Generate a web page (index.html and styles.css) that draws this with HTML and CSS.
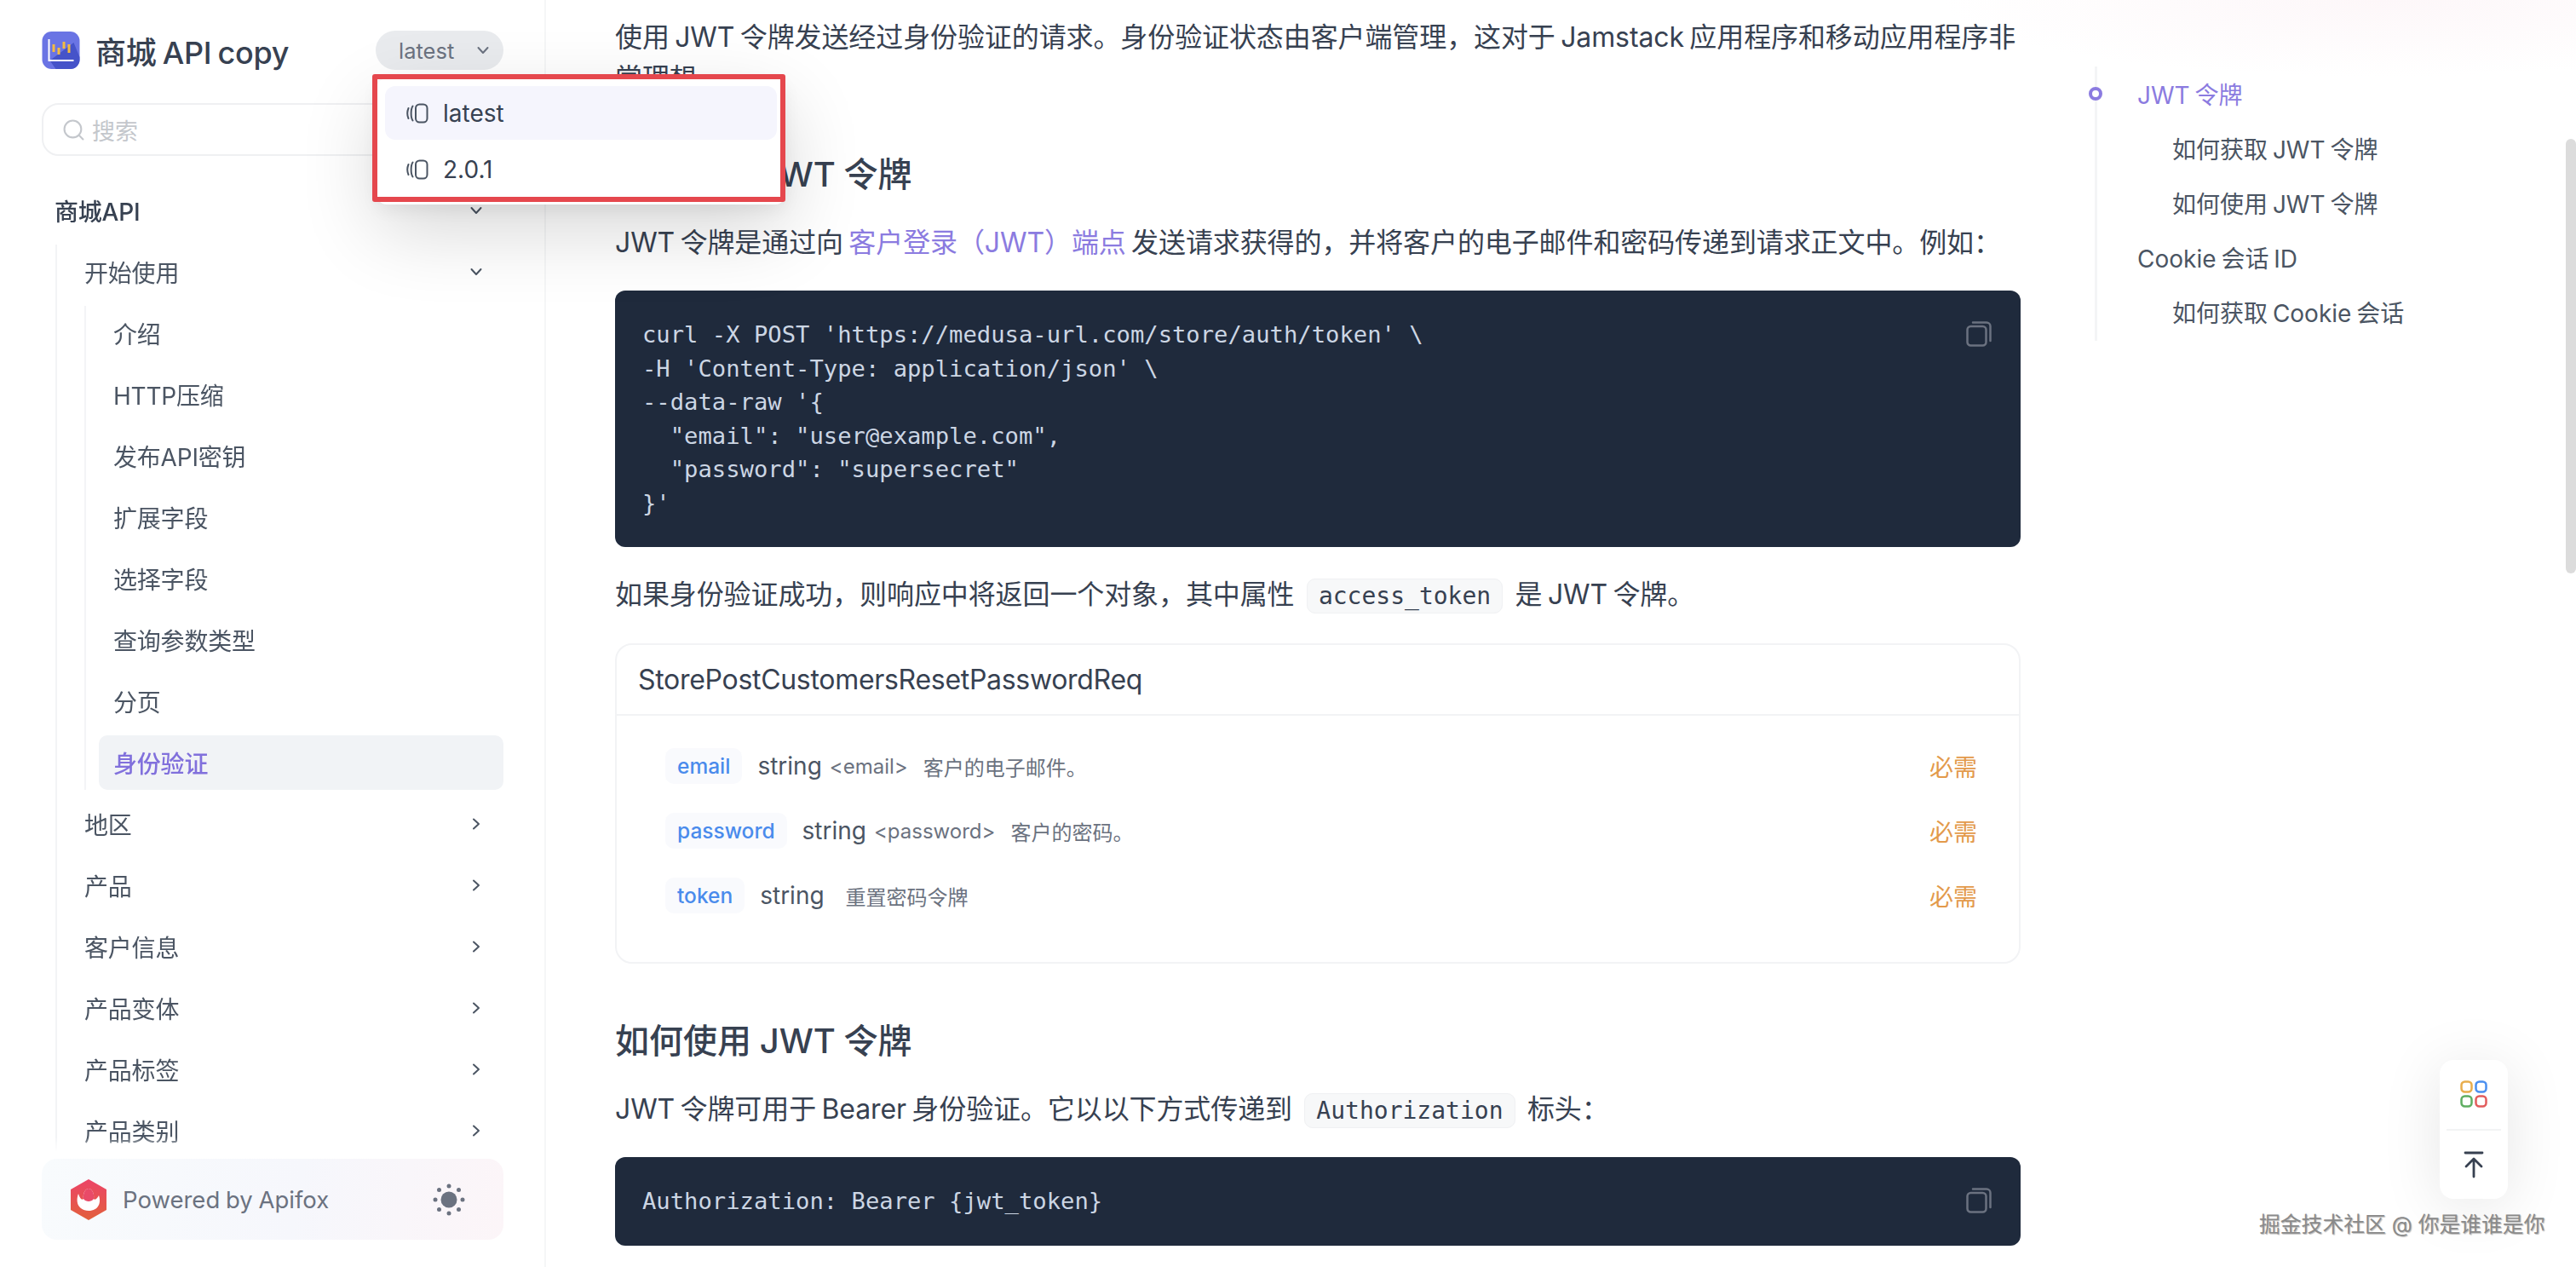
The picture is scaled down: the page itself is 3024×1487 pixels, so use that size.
FILE: index.html
```html
<!DOCTYPE html>
<html lang="zh-CN">
<head>
<meta charset="utf-8">
<title>商城 API copy</title>
<link rel="stylesheet" href="styles.css">
</head>
<body>
<svg class="defs" width="0" height="0" aria-hidden="true">
  <symbol id="down" viewBox="0 0 16 16"><path d="M2.5 5l5.5 6 5.500-6" fill="none" stroke="currentColor" stroke-width="2" stroke-linecap="round" stroke-linejoin="round"/></symbol>
  <symbol id="right" viewBox="0 0 16 16"><path d="M5 2.500l6 5.500-6 5.500" fill="none" stroke="currentColor" stroke-width="2" stroke-linecap="round" stroke-linejoin="round"/></symbol>
  <symbol id="ver" viewBox="0 0 26 24"><rect x="11" y="1.500" width="13.500" height="21" rx="4.500" fill="none" stroke="currentColor" stroke-width="2"/><path d="M7.500 3.500C5 7 5 17 7.500 20.500M2.500 6C1 9.500 1 14.500 2.500 18" fill="none" stroke="currentColor" stroke-width="2" stroke-linecap="round"/></symbol>
  <symbol id="copy" viewBox="0 0 30 30"><rect x="1.500" y="6" width="22" height="22.500" rx="4" fill="none" stroke="currentColor" stroke-width="2.500"/><path d="M8 1.500h16a4.500 4.500 0 0 1 4.500 4.500v17" fill="none" stroke="currentColor" stroke-width="2.500" stroke-linecap="round"/></symbol>
</svg>

<aside class="sidebar">
  <header class="brand">
    <svg class="brand-logo" viewBox="0 0 44 44">
      <rect width="44" height="44" rx="11" fill="#6a74e4"/>
      <path d="M9 34L37 13l7 17v3a11 11 0 0 1-11 11H16z" fill="#4553c9"/>
      <path d="M8 9v25h29" fill="none" stroke="#fff" stroke-width="2"/>
      <g fill="#f4bb41"><rect x="12" y="15" width="3" height="9"/><rect x="18" y="19" width="3" height="8"/><rect x="24" y="12" width="3" height="8"/><rect x="30" y="15" width="3" height="10"/></g>
    </svg>
    <span class="brand-name">商城 API copy</span>
    <button class="version-pill"><span>latest</span><svg class="pill-chev"><use href="#down"/></svg></button>
  </header>

  <div class="search">
    <svg class="search-icon" viewBox="0 0 24 24"><circle cx="11" cy="11" r="9.500" fill="none" stroke="currentColor" stroke-width="2"/><path d="M18 18l4.500 4.500" stroke="currentColor" stroke-width="2" stroke-linecap="round"/></svg>
    <span>搜索</span>
  </div>

  <nav class="nav">
    <div class="row row-top"><span>商城API</span><svg class="chev"><use href="#down"/></svg></div>
    <div class="group group-1">
      <div class="row"><span>开始使用</span><svg class="chev"><use href="#down"/></svg></div>
      <div class="group group-2">
        <div class="row"><span>介绍</span></div>
        <div class="row"><span>HTTP压缩</span></div>
        <div class="row"><span>发布API密钥</span></div>
        <div class="row"><span>扩展字段</span></div>
        <div class="row"><span>选择字段</span></div>
        <div class="row"><span>查询参数类型</span></div>
        <div class="row"><span>分页</span></div>
        <div class="row row-active"><span>身份验证</span></div>
      </div>
      <div class="row"><span>地区</span><svg class="chev"><use href="#right"/></svg></div>
      <div class="row"><span>产品</span><svg class="chev"><use href="#right"/></svg></div>
      <div class="row"><span>客户信息</span><svg class="chev"><use href="#right"/></svg></div>
      <div class="row"><span>产品变体</span><svg class="chev"><use href="#right"/></svg></div>
      <div class="row"><span>产品标签</span><svg class="chev"><use href="#right"/></svg></div>
      <div class="row"><span>产品类别</span><svg class="chev"><use href="#right"/></svg></div>
    </div>
  </nav>

  <footer class="powered">
    <svg class="fox" viewBox="0 0 42 48">
      <defs><linearGradient id="foxg" x1="0" y1="0" x2="0" y2="1"><stop offset="0" stop-color="#ec4468"/><stop offset="1" stop-color="#e2603c"/></linearGradient></defs>
      <path d="M21 0l21 12v24L21 48 0 36V12z" fill="url(#foxg)"/>
      <path d="M9 17c-3 8-2 19 12 20 12 0 15-10 12-18-2 4-5 6-6 4 1-6-2-12-6-12s-7 6-6 12c-2 2-4 0-6-6z" fill="#fff"/>
      <path d="M21 11c4 0 7 6 6 12-1 2-4 3-6 3s-5-1-6-3c-1-6 2-12 6-12z" fill="#e94a68"/>
    </svg>
    <span class="powered-text">Powered by Apifox</span>
    <svg class="sun" viewBox="0 0 38 38" fill="#6b7280">
      <circle cx="19" cy="19" r="9.500"/>
      <circle cx="19" cy="3" r="2.500"/><circle cx="19" cy="35" r="2.500"/><circle cx="3" cy="19" r="2.500"/><circle cx="35" cy="19" r="2.500"/>
      <circle cx="7.500" cy="7.500" r="2.500"/><circle cx="30.500" cy="7.500" r="2.500"/><circle cx="7.500" cy="30.500" r="2.500"/><circle cx="30.500" cy="30.500" r="2.500"/>
    </svg>
  </footer>

  <div class="dropdown">
    <div class="dd-item dd-active"><svg class="dd-icon"><use href="#ver"/></svg><span>latest</span></div>
    <div class="dd-item"><svg class="dd-icon"><use href="#ver"/></svg><span>2.0.1</span></div>
  </div>
  <div class="red-frame"></div>
</aside>

<main class="content">
  <p class="para para-first">使用 JWT 令牌发送经过身份验证的请求。身份验证状态由客户端管理，这对于 Jamstack 应用程序和移动应用程序非常理想。</p>
  <h2 class="heading heading-first">如何获取 JWT 令牌</h2>
  <p class="para para-tight">JWT 令牌是通过向 <a class="link">客户登录（JWT）端点</a> 发送请求获得的，并将客户的电子邮件和密码传递到请求正文中。例如：</p>
  <div class="code-block">
<pre class="code">curl -X POST 'https://medusa-url.com/store/auth/token' \
-H 'Content-Type: application/json' \
--data-raw '{
  "email": "user@example.com",
  "password": "supersecret"
}'</pre>
    <svg class="copy"><use href="#copy"/></svg>
  </div>
  <p class="para">如果身份验证成功，则响应中将返回一个对象，其中属性 <code class="inline">access_token</code> 是 JWT 令牌。</p>

  <section class="schema">
    <h3 class="schema-title">StorePostCustomersResetPasswordReq</h3>
    <div class="schema-body">
      <div class="prop">
        <span class="prop-name">email</span><span class="prop-type">string</span><span class="prop-format">&lt;email&gt;</span><span class="prop-desc">客户的电子邮件。</span><span class="prop-req">必需</span>
      </div>
      <div class="prop">
        <span class="prop-name">password</span><span class="prop-type">string</span><span class="prop-format">&lt;password&gt;</span><span class="prop-desc">客户的密码。</span><span class="prop-req">必需</span>
      </div>
      <div class="prop">
        <span class="prop-name">token</span><span class="prop-type">string</span><span class="prop-desc prop-desc-wide">重置密码令牌</span><span class="prop-req">必需</span>
      </div>
    </div>
  </section>

  <h2 class="heading heading-second">如何使用 JWT 令牌</h2>
  <p class="para para-tight">JWT 令牌可用于 Bearer 身份验证。它以以下方式传递到 <code class="inline">Authorization</code> 标头：</p>
  <div class="code-block">
<pre class="code">Authorization: Bearer {jwt_token}</pre>
    <svg class="copy"><use href="#copy"/></svg>
  </div>
</main>

<aside class="toc">
  <span class="toc-dot"></span>
  <a class="toc-item toc-active">JWT 令牌</a>
  <a class="toc-item toc-sub">如何获取 JWT 令牌</a>
  <a class="toc-item toc-sub">如何使用 JWT 令牌</a>
  <a class="toc-item">Cookie 会话 ID</a>
  <a class="toc-item toc-sub">如何获取 Cookie 会话</a>
</aside>

<div class="scroll-thumb"></div>

<div class="float-card">
  <div class="float-cell">
    <svg class="apps" viewBox="0 0 32 32" fill="none" stroke-width="2.500">
      <rect x="1.500" y="1.500" width="12" height="12" rx="4" stroke="#e8ad4c"/>
      <rect x="18.500" y="1.500" width="12" height="12" rx="4" stroke="#4a8ff0"/>
      <rect x="1.500" y="18.500" width="12" height="12" rx="4" stroke="#5fae62"/>
      <rect x="18.500" y="18.500" width="12" height="12" rx="4" stroke="#e25c5c"/>
    </svg>
  </div>
  <div class="float-cell float-cell-top">
    <svg class="totop" viewBox="0 0 24 32" fill="none" stroke="#374151" stroke-width="2.800" stroke-linecap="round" stroke-linejoin="round">
      <path d="M2 2h20M12 30V10M3 18l9-9 9 9"/>
    </svg>
  </div>
</div>

<div class="watermark">掘金技术社区 @ 你是谁谁是你</div>
</body>
</html>
```
FILE: styles.css
```css
* { box-sizing: border-box; }
html, body { margin: 0; height: 100%; }
body {
  display: flex;
  height: 1487px;
  overflow: hidden;
  position: relative;
  background: radial-gradient(ellipse 520px 90px at 2800px 0, #fdf7f9, rgba(253,247,249,0)) #fff;
  font-family: Inter, "Noto Sans CJK SC", sans-serif;
  color: #374151;
  font-size: 32px;
}
.defs { position: absolute; }

/* sidebar */
.sidebar {
  position: relative;
  z-index: 10;
  flex: none;
  width: 641px;
  display: flex;
  flex-direction: column;
  padding: 36px 48px 32px 49px;
  border-right: 2px solid #f5f6f7;
  background: #fff;
}
.brand { display: flex; align-items: center; height: 46px; }
.brand-logo { width: 45px; height: 44px; flex: none; margin-right: 18px; }
.brand-name { font-size: 36px; font-weight: 500; color: #374151; white-space: nowrap; letter-spacing: -.3px; word-spacing: -2px; }
.version-pill {
  margin-left: auto;
  width: 150px;
  height: 46px;
  border: 0;
  border-radius: 23px;
  background: #e9ebee;
  color: #6b7280;
  font: 25.500px Inter, sans-serif;
  display: flex;
  align-items: center;
  padding: 0 16px 0 27px;
  justify-content: space-between;
}
.pill-chev { width: 16px; height: 16px; color: #6b7280; }

.search {
  margin-top: 39px;
  height: 62px;
  border: 2px solid #eff0f2;
  border-radius: 20px;
  display: flex;
  align-items: center;
  padding-left: 23px;
  color: #c4c7cc;
  font-size: 27px;
}
.search-icon { width: 25px; height: 25px; margin-right: 9px; }

.nav {
  flex: 1;
  min-height: 0;
  margin-top: 32px;
  overflow: hidden;
  -webkit-mask-image: linear-gradient(#000 calc(100% - 17px), transparent);
  mask-image: linear-gradient(#000 calc(100% - 17px), transparent);
}
.row {
  height: 64px;
  margin-bottom: 8px;
  display: flex;
  align-items: center;
  justify-content: space-between;
  padding: 0 24px 0 17px;
  border-radius: 10px;
  font-size: 28px;
  letter-spacing: -.2px;
  color: #4b5563;
  white-space: nowrap;
}
.row-top { padding-left: 15px; font-weight: 500; color: #374151; }
.chev { width: 16px; height: 16px; color: #4b5563; flex: none; }
.group { border-left: 2px solid #f3f4f6; padding-left: 15px; }
.group-1 { margin-left: 16px; }
.group-2 { margin-left: 17px; margin-bottom: 8px; }
.group-2 .row:last-child { margin-bottom: 0; }
.row-active { background: #f1f3f6; color: #8170dc; font-weight: 500; }

.powered {
  flex: none;
  margin-top: 8px;
  height: 95px;
  border-radius: 18px;
  background: linear-gradient(100deg, #f8fbfd 0%, #f6f7fc 55%, #fcf5f8 100%);
  display: flex;
  align-items: center;
  padding-left: 34px;
}
.fox { width: 42px; height: 48px; margin-right: 19px; flex: none; }
.powered-text { font-size: 27.500px; color: #6b7280; white-space: nowrap; word-spacing: -1px; }
.sun { width: 38px; height: 38px; margin-left: auto; margin-right: 45px; }

.dropdown {
  position: absolute;
  left: 442px;
  top: 92px;
  width: 480px;
  height: 148px;
  padding: 9px 10px;
  display: flex;
  flex-direction: column;
  gap: 3px;
  background: #fff;
  border-radius: 12px;
  box-shadow: 0 30px 90px rgba(0,0,0,.16), 0 6px 20px rgba(0,0,0,.06);
}
.dd-item {
  height: 63px;
  flex: none;
  display: flex;
  align-items: center;
  padding-left: 25px;
  border-radius: 12px;
  font-size: 28px;
  color: #374151;
}
.dd-active { background: #f5f5fd; }
.dd-icon { width: 26px; height: 24px; margin-right: 17px; color: #4b5563; }
.red-frame {
  position: absolute;
  left: 437px;
  top: 87px;
  width: 485px;
  height: 150px;
  border: 6px solid #e5474d;
  border-radius: 3px;
}

/* content */
.content {
  flex: none;
  width: 1650px;
  margin-left: 81px;
  padding-top: 20px;
}
.para { margin: 32px 0 0; line-height: 48px; word-spacing: -2.500px; letter-spacing: -.1px; }
.para-first { margin-top: 0; }
.para-tight { margin-top: 28px; }
.link { color: #8b7be0; }
.heading { margin: 0; font-size: 40px; line-height: 56px; font-weight: 500; color: #374151; word-spacing: -1px; }
.heading-first { margin-top: 61px; }
.heading-second { margin-top: 63px; }
.code-block {
  position: relative;
  margin-top: 32px;
  padding: 32px;
  background: #1f2a3c;
  border-radius: 12px;
}
.code {
  margin: 0;
  font: 27.200px/39.500px "DejaVu Sans Mono", monospace;
  color: #ccd6e4;
}
.copy {
  position: absolute;
  top: 36px;
  right: 34px;
  width: 30px;
  height: 30px;
  color: #6b7280;
}
.inline {
  font: 28px "DejaVu Sans Mono", monospace;
  word-spacing: 0;
  letter-spacing: 0;
  color: #374151;
  background: #f7f8f9;
  border: 1px solid #f0f1f3;
  border-radius: 10px;
  padding: 3px 13px;
  margin: 0 8px;
}

.schema {
  margin-top: 33px;
  height: 376px;
  border: 2px solid #f2f3f5;
  border-radius: 20px;
}
.schema-title {
  margin: 0;
  height: 83px;
  padding-left: 25px;
  display: flex;
  align-items: center;
  border-bottom: 2px solid #f2f3f5;
  font-size: 32px;
  font-weight: 400;
  letter-spacing: -.3px;
  color: #374151;
}
.schema-body { padding: 21px 49px 0 57px; }
.prop { height: 76px; display: flex; align-items: center; white-space: nowrap; }
.prop-name {
  height: 42px;
  display: flex;
  align-items: center;
  padding: 0 14px;
  border-radius: 10px;
  background: #f9fafd;
  color: #4a8bec;
  font-size: 24.500px;
  font-weight: 500;
  margin-right: 18px;
}
.prop-type { font-size: 28px; color: #4b5563; margin-right: 9px; }
.prop-format { font-size: 24px; color: #6b7280; margin-right: 18px; }
.prop-desc { font-size: 24px; color: #6b7280; }
.prop-desc-wide { margin-left: 16px; }
.prop-req { margin-left: auto; font-size: 28px; color: #e39a4b; }

/* table of contents */
.toc {
  position: relative;
  flex: none;
  align-self: flex-start;
  margin: 78px 0 0 87px;
  padding-left: 47px;
  height: 322px;
  border-left: 3px solid #f4f5f6;
  display: flex;
  flex-direction: column;
}
.toc-item { height: 64px; display: flex; align-items: center; font-size: 28px; color: #4b5563; white-space: nowrap; word-spacing: -2px; }
.toc-sub { padding-left: 41px; }
.toc-active { color: #8b7be0; }
.toc-dot {
  position: absolute;
  left: -10px;
  top: 24px;
  width: 16px;
  height: 16px;
  border: 4px solid #8b7be0;
  border-radius: 50%;
  background: #fff;
}

.scroll-thumb {
  position: absolute;
  right: 0;
  top: 163px;
  width: 12px;
  height: 510px;
  border-radius: 6px;
  background: #dcdcdc;
}
.float-card {
  position: absolute;
  left: 2864px;
  top: 1244px;
  width: 80px;
  height: 163px;
  border-radius: 16px;
  background: #fff;
  box-shadow: 0 8px 70px rgba(0,0,0,.1);
  padding: 0 8px;
  display: flex;
  flex-direction: column;
}
.float-cell { flex: 1; display: flex; align-items: center; justify-content: center; }
.float-cell-top { border-top: 2px solid #f2f3f4; }
.apps { width: 32px; height: 32px; }
.totop { width: 24px; height: 32px; }
.watermark {
  position: absolute;
  left: 2652px;
  top: 1421px;
  font-size: 24.800px;
  line-height: 32px;
  white-space: nowrap;
  color: #8a8a8a;
  text-shadow: 1px 1px 1px rgba(60,60,60,.35);
}
```
